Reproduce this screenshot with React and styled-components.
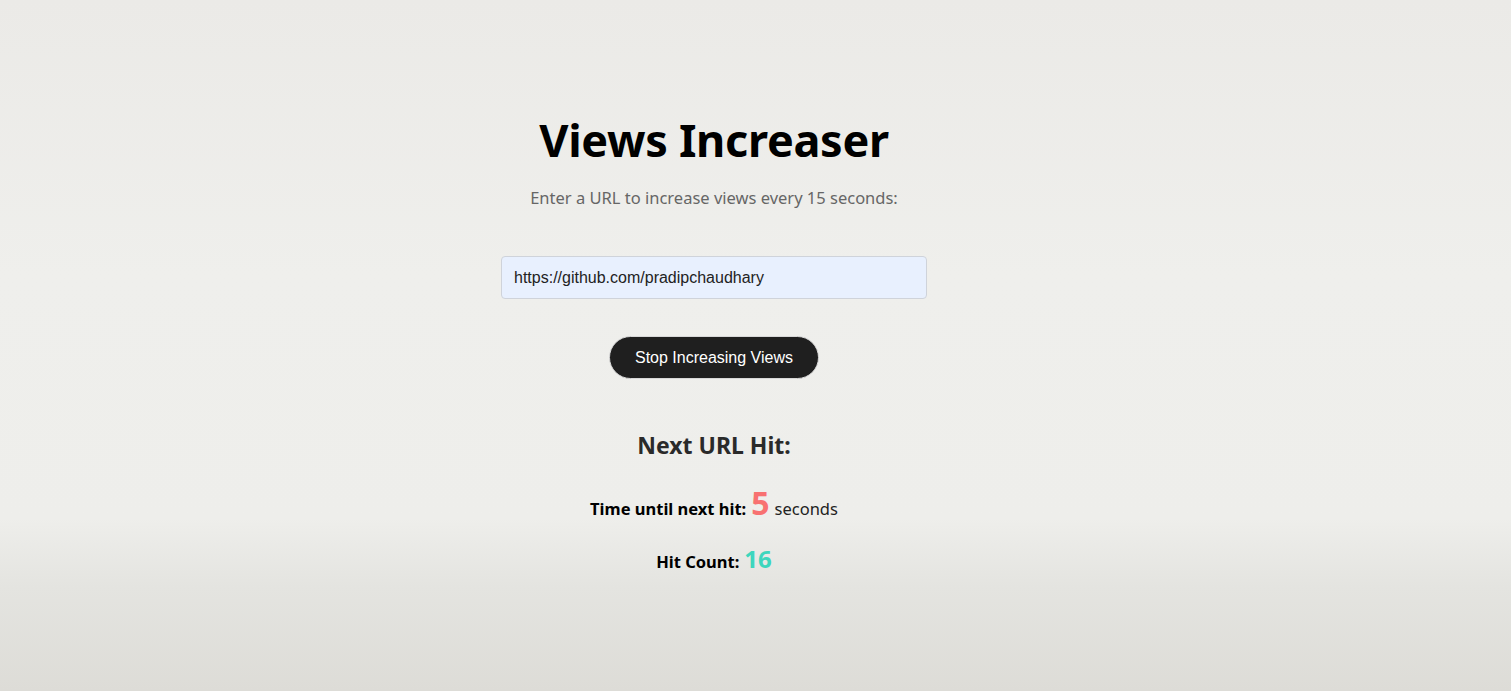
import React, { useState } from "react";
import styled, { createGlobalStyle } from "styled-components";

const Global = createGlobalStyle`
  html, body { margin: 0; padding: 0; }
  body {
    font-family: "Noto Sans", "Open Sans", sans-serif;
    background: linear-gradient(180deg, #ebeae7 0%, #efefec 40%, #eeeeeb 75%, #e4e4e0 85%, #dddcd7 100%);
    min-height: 691px;
  }
`;

const Page = styled.main`
  min-height: 691px;
  box-sizing: border-box;
  display: flex;
  flex-direction: column;
  align-items: center;
  padding: 108px 83px 0 0;
`;

const Title = styled.h1`
  margin: 0;
  font-size: 45px;
  line-height: 64px;
  font-weight: 700;
  color: #000;
  letter-spacing: -0.3px;
`;

const Subtitle = styled.p`
  margin: 14px 0 0;
  font-size: 16.5px;
  line-height: 24px;
  color: #666;
`;

const UrlInput = styled.input`
  margin-top: 46px;
  width: 426px;
  height: 43px;
  box-sizing: border-box;
  padding: 0 12px;
  border: 1px solid #cfd3da;
  border-radius: 4px;
  background: #e8f0fe;
  font-family: "Liberation Sans", Arial, sans-serif;
  font-size: 16px;
  color: #222;
  outline: none;
`;

const ActionButton = styled.button`
  margin-top: 37px;
  height: 43px;
  padding: 0 25px;
  border-radius: 22px;
  border: 1px solid #d8d8d8;
  background: #1f1f1f;
  color: #fff;
  font-family: "Liberation Sans", Arial, sans-serif;
  font-size: 16px;
  cursor: pointer;
`;

const SectionTitle = styled.h2`
  margin: 50px 0 0;
  font-size: 23px;
  line-height: 32px;
  font-weight: 700;
  color: #2a2a2a;
`;

const StatLine = styled.p`
  margin: ${(p) => p.$gap}px 0 0;
  font-size: 16.5px;
  line-height: 24px;
  color: #111;
  display: flex;
  align-items: baseline;
  gap: 5px;
`;

const Label = styled.strong`
  font-weight: 700;
  color: #000;
`;

const Value = styled.span`
  font-weight: 700;
  font-size: ${(p) => p.$size}px;
  color: ${(p) => p.$color};
`;

const Unit = styled.span`
  color: #222;
`;

export default function App() {
  const [url, setUrl] = useState("https://github.com/pradipchaudhary");
  return (
    <>
      <Global />
      <Page>
        <Title>Views Increaser</Title>
        <Subtitle>Enter a URL to increase views every 15 seconds:</Subtitle>
        <UrlInput value={url} onChange={(e) => setUrl(e.target.value)} />
        <ActionButton>Stop Increasing Views</ActionButton>
        <SectionTitle>Next URL Hit:</SectionTitle>
        <StatLine $gap={30}>
          <Label>Time until next hit:</Label>
          <Value $size={32} $color="#f87171">5</Value>
          <Unit>seconds</Unit>
        </StatLine>
        <StatLine $gap={26}>
          <Label>Hit Count:</Label>
          <Value $size={24} $color="#3dd6bd">16</Value>
        </StatLine>
      </Page>
    </>
  );
}
